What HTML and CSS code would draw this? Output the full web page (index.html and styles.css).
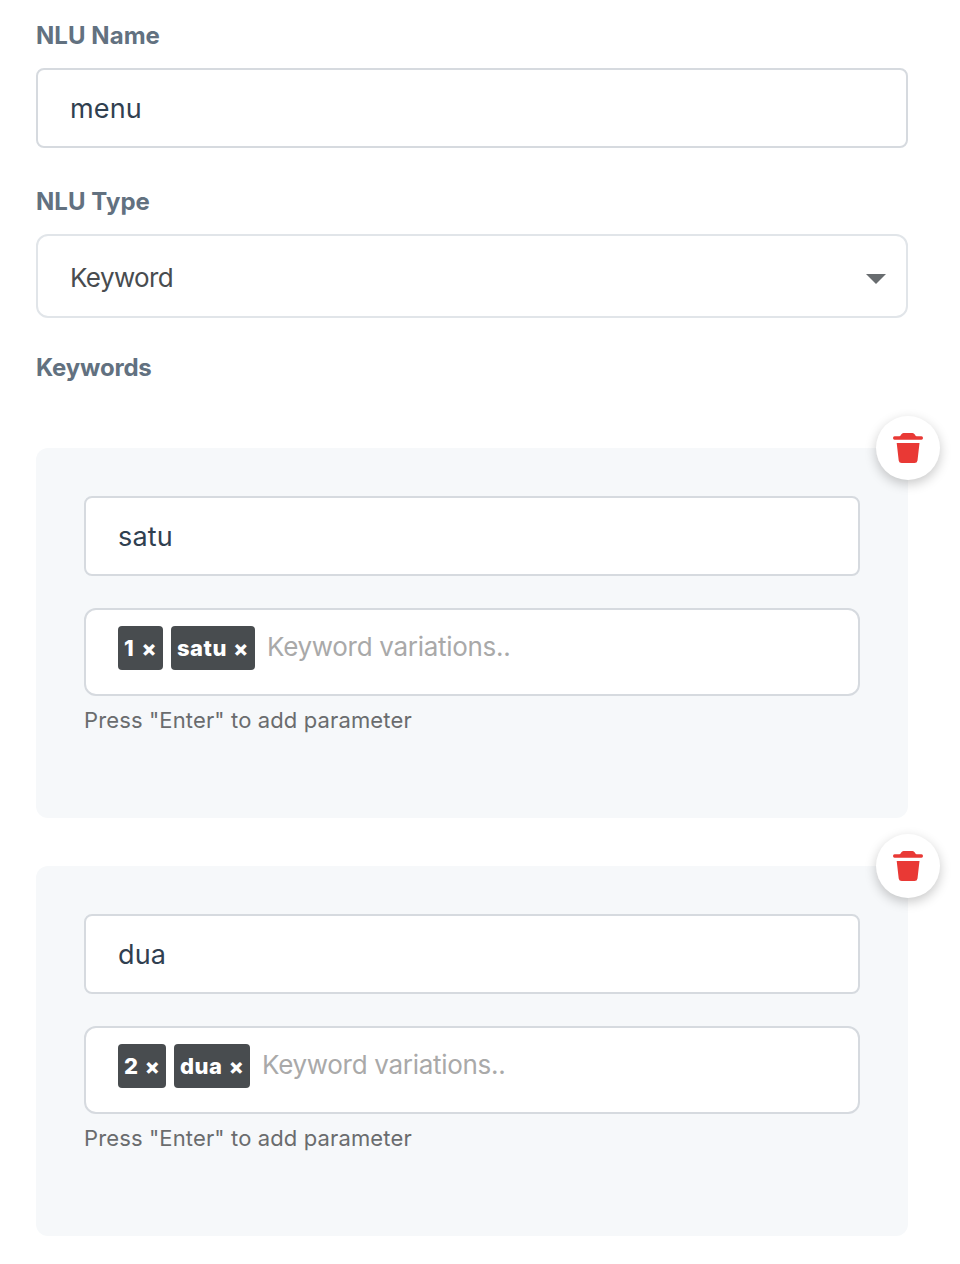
FILE: index.html
```html
<!DOCTYPE html>
<html lang="en">
<head>
<meta charset="utf-8">
<title>NLU</title>
<link rel="stylesheet" href="styles.css">
</head>
<body>
<main class="form">
  <label class="label">NLU Name</label>
  <div class="input name"><span>menu</span></div>
  <label class="label">NLU Type</label>
  <div class="select"><span class="select-text">Keyword</span><svg class="caret" width="20" height="10" viewBox="0 0 20 10"><path d="M0 0h20L10 10z"/></svg></div>
  <label class="label label-keywords">Keywords</label>
  <section class="card">
    <button class="delete" aria-label="Delete"><svg width="30" height="30" viewBox="0 0 30 30"><path d="M1.500 3.300H6.500Q7.500 3 8.200 1.500 9 0 10.500 0h9q1.500 0 2.300 1.500.7 1.500 1.700 1.800h5q1.500 0 1.500 1.700t-1.500 1.700h-27Q0 6.700 0 5t1.500-1.700zM3.700 10h22.800l-2 17.500q-.4 2.500-3 2.500H8.700q-2.600 0-3-2.500z"/></svg></button>
    <div class="input"><span>satu</span></div>
    <div class="tags"><span class="tag tag-one">1 ×</span><span class="tag tag-satu">satu ×</span><span class="placeholder">Keyword variations..</span></div>
    <p class="hint">Press "Enter" to add parameter</p>
  </section>
  <section class="card">
    <button class="delete" aria-label="Delete"><svg width="30" height="30" viewBox="0 0 30 30"><path d="M1.500 3.300H6.500Q7.500 3 8.200 1.500 9 0 10.500 0h9q1.500 0 2.300 1.500.7 1.500 1.700 1.800h5q1.500 0 1.500 1.700t-1.500 1.700h-27Q0 6.700 0 5t1.500-1.700zM3.700 10h22.800l-2 17.500q-.4 2.500-3 2.500H8.700q-2.600 0-3-2.500z"/></svg></button>
    <div class="input"><span>dua</span></div>
    <div class="tags"><span class="tag tag-two">2 ×</span><span class="tag tag-dua">dua ×</span><span class="placeholder">Keyword variations..</span></div>
    <p class="hint">Press "Enter" to add parameter</p>
  </section>
</main>
</body>
</html>
```
FILE: styles.css
```css
* { box-sizing: border-box; }
body { margin: 0; background: #fff; font-family: Inter, sans-serif; }
.form { width: 872px; margin-left: 36px; padding-top: 20px; }
.label { display: block; height: 30px; line-height: 32px; font-size: 24px; font-weight: 650; letter-spacing: .05px; color: #627180; }
.label-keywords { letter-spacing: -.2px; }
.input { height: 80px; padding: 0 32px; border: 2px solid #d6dadf; border-radius: 8px; background: #fff; color: #304050; font-size: 27px; line-height: 78px; letter-spacing: .15px; }
.name { margin: 18px 0 38px; }
.select { display: flex; align-items: center; justify-content: space-between; height: 84px; margin: 18px 0 34px; padding: 0 20px 0 32px; border: 2px solid #e1e5e9; border-radius: 12px; color: #484c4f; font-size: 26px; letter-spacing: -.6px; }
.select-text { padding-top: 2px; }
.caret { fill: #686c6f; margin-top: 5px; }
.card { position: relative; height: 370px; margin-top: 48px; padding: 48px; border-radius: 12px; background: #f6f8fa; }
.label + .card { margin-top: 66px; }
.delete { position: absolute; right: -32px; top: -32px; display: grid; place-items: center; width: 64px; height: 64px; padding: 0; border: 0; border-radius: 50%; background: #fff; box-shadow: 0 4px 12px rgba(0,0,0,.22); }
.delete svg { fill: #e93935; }
.tags { display: flex; height: 88px; margin-top: 32px; padding: 16px 32px; border: 2px solid #d6dadf; border-radius: 12px; background: #fff; }
.tag { height: 44px; margin-right: 8px; padding-left: 6px; border-radius: 4px; background: #484c4f; color: #fff; font-size: 22px; font-weight: 800; line-height: 44px; letter-spacing: .5px; word-spacing: 1px; white-space: nowrap; }
.tag-one { width: 45px; word-spacing: 2px; }
.tag-satu { width: 84px; }
.tag-two { width: 48px; }
.tag-dua { width: 76px; }
.placeholder { margin-left: 4px; color: #a9a9a9; font-size: 26px; line-height: 42px; letter-spacing: -.3px; }
.hint { margin: 8px 0 0; color: #6a6c6e; font-size: 22px; line-height: 32px; letter-spacing: .13px; }
```
